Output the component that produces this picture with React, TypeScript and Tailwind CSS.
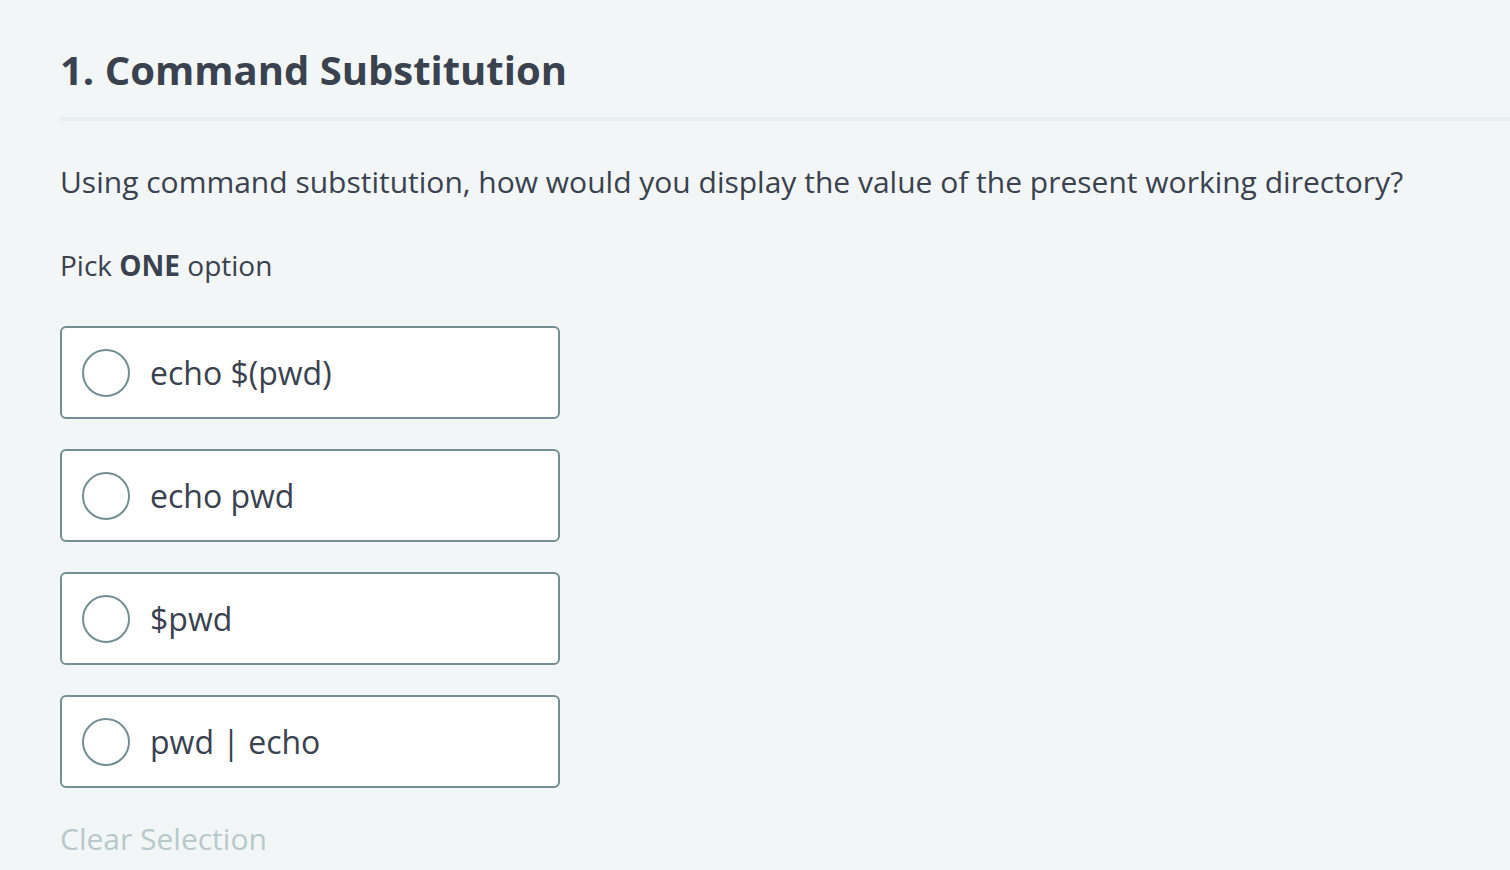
const options = ["echo $(pwd)", "echo pwd", "$pwd", "pwd | echo"];

export default function App() {
  return (
    <div
      className="min-h-[870px] w-full bg-[#f3f6f7] pl-[60px] text-[#39424e]"
      style={{ fontFamily: '"Open Sans", sans-serif' }}
    >
      <div className="pt-[40px]">
        <h1 className="text-[40px] font-bold leading-[60px]">1. Command Substitution</h1>
        <div className="mt-[17px] h-[4px] bg-[#e6eeef]" />
      </div>

      <p className="mt-[41px] text-[30px] leading-[40px]">
        Using command substitution, how would you display the value of the present working directory?
      </p>

      <p className="mt-[43px] text-[28px] leading-[40px]">
        Pick <span className="font-bold">ONE</span> option
      </p>

      <div className="mt-[41px] flex w-[500px] flex-col gap-[30px]">
        {options.map((opt) => (
          <label
            key={opt}
            className="flex h-[93px] items-center gap-[20px] rounded-[6px] border-2 border-[#738f93] bg-white pl-[20px]"
          >
            <span className="h-[48px] w-[48px] shrink-0 rounded-full border-2 border-[#738f93]" />
            <span className="text-[32px] leading-[40px]">{opt}</span>
          </label>
        ))}
      </div>

      <div className="mt-[31px] text-[30px] leading-[40px] text-[#b7c9cc]">Clear Selection</div>
    </div>
  );
}
